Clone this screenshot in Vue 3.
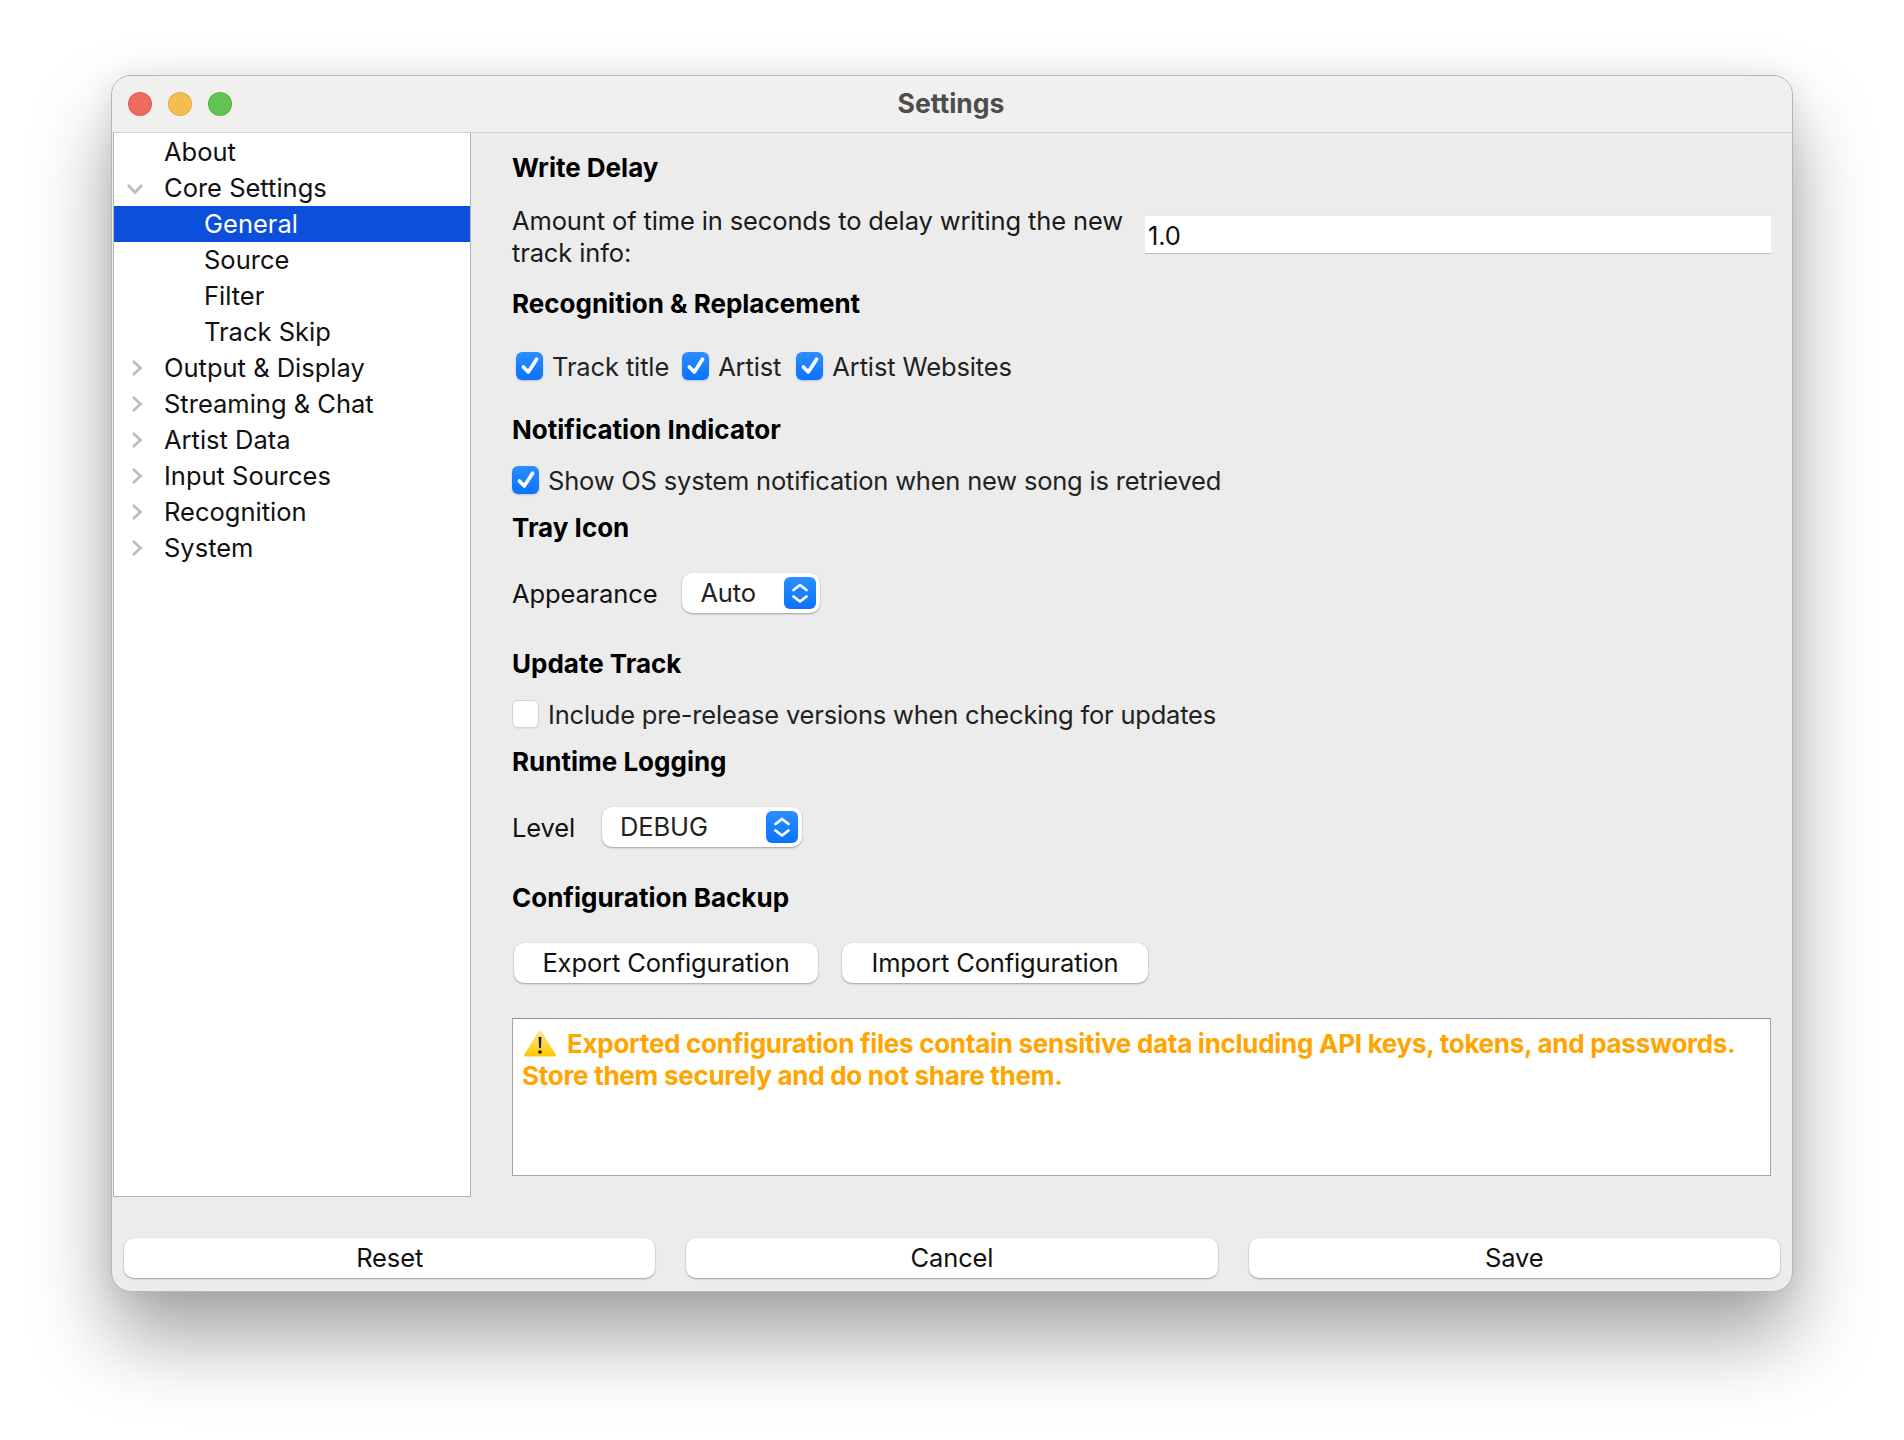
<script setup>
const tree = [
  { label: 'About', level: 1 },
  { label: 'Core Settings', level: 1, arrow: 'down' },
  { label: 'General', level: 2, selected: true },
  { label: 'Source', level: 2 },
  { label: 'Filter', level: 2 },
  { label: 'Track Skip', level: 2 },
  { label: 'Output & Display', level: 1, arrow: 'right' },
  { label: 'Streaming & Chat', level: 1, arrow: 'right' },
  { label: 'Artist Data', level: 1, arrow: 'right' },
  { label: 'Input Sources', level: 1, arrow: 'right' },
  { label: 'Recognition', level: 1, arrow: 'right' },
  { label: 'System', level: 1, arrow: 'right' },
]
const recog = [
  { label: 'Track title', cls: 'c1' },
  { label: 'Artist', cls: 'c2' },
  { label: 'Artist Websites', cls: 'c3' },
]
</script>

<template>
  <div class="page">
    <div class="window">
      <header class="titlebar">
        <div class="lights">
          <span class="light red"></span>
          <span class="light yellow"></span>
          <span class="light green"></span>
        </div>
        <div class="title">Settings</div>
      </header>

      <div class="body">
        <nav class="sidebar">
          <div
            v-for="item in tree"
            :key="item.label"
            class="row"
            :class="['lvl' + item.level, { selected: item.selected }]"
          >
            <svg v-if="item.arrow === 'down'" class="arrow down" viewBox="0 0 18 12" width="18" height="12">
              <path d="M2 2 L9 9.5 L16 2" fill="none" stroke="#bcbcbc" stroke-width="2.6" />
            </svg>
            <svg v-if="item.arrow === 'right'" class="arrow right" viewBox="0 0 12 18" width="12" height="18">
              <path d="M2 2 L9.5 9 L2 16" fill="none" stroke="#bcbcbc" stroke-width="2.6" />
            </svg>
            <span>{{ item.label }}</span>
          </div>
        </nav>

        <main class="panel">
          <h3 class="heading first">Write Delay</h3>
          <div class="delay">
            <label class="delay-label">Amount of time in seconds to delay writing the new track info:</label>
            <input class="delay-input" value="1.0" />
          </div>

          <h3 class="heading sm">Recognition &amp; Replacement</h3>
          <div class="checks">
            <div v-for="c in recog" :key="c.label" class="check" :class="c.cls">
              <span class="box on">
                <svg viewBox="0 0 28 28" width="28" height="28"><path d="M7.4 15 L12.3 20 L20.6 7.2" fill="none" stroke="#fff" stroke-width="3.6" stroke-linecap="round" stroke-linejoin="round" /></svg>
              </span>
              <span class="check-text">{{ c.label }}</span>
            </div>
          </div>

          <h3 class="heading lg">Notification Indicator</h3>
          <div class="check solo">
            <span class="box on">
              <svg viewBox="0 0 28 28" width="28" height="28"><path d="M7.4 15 L12.3 20 L20.6 7.2" fill="none" stroke="#fff" stroke-width="3.6" stroke-linecap="round" stroke-linejoin="round" /></svg>
            </span>
            <span class="check-text">Show OS system notification when new song is retrieved</span>
          </div>

          <h3 class="heading sm">Tray Icon</h3>
          <div class="field">
            <span class="field-label">Appearance</span>
            <div class="combo auto">
              <span class="combo-text">Auto</span>
              <span class="stepper">
                <svg viewBox="0 0 32 32" width="32" height="32"><path d="M9.5 13 L16 8 L22.5 13 M9.5 19.5 L16 24.5 L22.5 19.5" fill="none" stroke="#fff" stroke-width="2.8" stroke-linecap="round" stroke-linejoin="round" /></svg>
              </span>
            </div>
          </div>

          <h3 class="heading lgx">Update Track</h3>
          <div class="check solo">
            <span class="box"></span>
            <span class="check-text">Include pre-release versions when checking for updates</span>
          </div>

          <h3 class="heading sm">Runtime Logging</h3>
          <div class="field">
            <span class="field-label">Level</span>
            <div class="combo debug">
              <span class="combo-text">DEBUG</span>
              <span class="stepper">
                <svg viewBox="0 0 32 32" width="32" height="32"><path d="M9.5 13 L16 8 L22.5 13 M9.5 19.5 L16 24.5 L22.5 19.5" fill="none" stroke="#fff" stroke-width="2.8" stroke-linecap="round" stroke-linejoin="round" /></svg>
              </span>
            </div>
          </div>

          <h3 class="heading lgx">Configuration Backup</h3>
          <div class="backup">
            <button class="btn export">Export Configuration</button>
            <button class="btn import">Import Configuration</button>
          </div>

          <div class="warning">
            <svg class="warn-icon" viewBox="0 0 34 28" width="34" height="28">
              <defs>
                <linearGradient id="wg" x1="0" y1="0" x2="0" y2="1">
                  <stop offset="0" stop-color="#ffe58a" />
                  <stop offset="1" stop-color="#ffc800" />
                </linearGradient>
              </defs>
              <path d="M17 1.5 Q18 1.5 18.8 3 L32.6 25 Q33.6 27.5 31 27.5 L3 27.5 Q0.4 27.5 1.4 25 L15.2 3 Q16 1.5 17 1.5 Z" fill="url(#wg)" />
              <path d="M15.6 8 L18.4 8 L17.9 19 L16.1 19 Z" fill="#1a1a1a" />
              <circle cx="17" cy="23" r="1.8" fill="#1a1a1a" />
            </svg>
            <span>Exported configuration files contain sensitive data including API keys, tokens, and passwords.</span>
            <br />
            <span>Store them securely and do not share them.</span>
          </div>
        </main>
      </div>

      <footer class="footer">
        <button class="btn">Reset</button>
        <button class="btn">Cancel</button>
        <button class="btn">Save</button>
      </footer>
    </div>
  </div>
</template>

<style>
html, body { margin: 0; background: #fff; }
</style>

<style scoped>
.page {
  width: 1904px;
  height: 1440px;
  box-sizing: border-box;
  padding: 75px 0 0 111px;
  overflow: hidden;
  background: #fff;
  font-family: Inter, "Liberation Sans", sans-serif;
  font-size: 25.5px;
  letter-spacing: -0.13px;
  color: #1a1a1a;
}
.window {
  width: 1682px;
  height: 1217px;
  box-sizing: border-box;
  border: 1px solid #b5b5b5;
  border-radius: 20px;
  background: #ececec;
  box-shadow: 0 46px 80px rgba(0, 0, 0, 0.36), 0 0 30px rgba(0, 0, 0, 0.08);
  overflow: hidden;
}
.titlebar {
  height: 56px;
  display: flex;
  align-items: center;
  position: relative;
  background: #f1f0ef;
  border-bottom: 1px solid #d2d2d2;
}
.lights { display: flex; gap: 16px; margin-left: 16px; }
.light {
  width: 24px;
  height: 24px;
  box-sizing: border-box;
  border-radius: 50%;
  border: 1px solid rgba(0, 0, 0, 0.1);
}
.red { background: #ee6a5f; }
.yellow { background: #f5bd4f; }
.green { background: #61c454; }
.title {
  position: absolute;
  left: 0;
  right: 0;
  text-align: center;
  font-size: 26.5px;
  font-weight: 700;
  letter-spacing: 0;
  color: #4d4d4d;
  margin: -3px 0 0 -2px;
}
.body { display: flex; height: 1064px; }
.sidebar {
  width: 358px;
  height: 1065px;
  margin: -1px 0 0 1px;
  padding-top: 1px;
  flex: none;
  box-sizing: border-box;
  background: #fff;
  border: 1px solid #b3b3b3;
  border-top-color: #808080;
  letter-spacing: 0;
}
.row {
  height: 36px;
  line-height: 36px;
  position: relative;
  color: #111;
  white-space: nowrap;
}
.lvl1 { padding-left: 50px; }
.lvl2 { padding-left: 90px; }
.selected { background: #0b4fdb; color: #fff; }
.arrow { position: absolute; }
.arrow.down { left: 12px; top: 13px; }
.arrow.right { left: 17px; top: 9px; }

.panel {
  flex: 1;
  min-width: 0;
  padding: 0 21px 0 41px;
  display: flex;
  flex-direction: column;
}
.heading {
  margin: 0;
  height: 32px;
  line-height: 32px;
  font-size: 26px;
  font-weight: 700;
  letter-spacing: 0;
  color: #000;
}
.first { margin-top: 19px; }
.sm { margin-top: 18px; }
.lg { margin-top: 34px; }
.lgx { margin-top: 35px; }
.delay {
  margin-top: 22px;
  display: grid;
  grid-template-columns: 633px 1fr;
  height: 64px;
}
.delay-label { line-height: 31.5px; max-width: 625px; margin-top: -1px; }
.delay-input {
  margin-top: 9px;
  height: 39px;
  box-sizing: border-box;
  width: 100%;
  border: 0;
  border-bottom: 1px solid #bdbdbd;
  border-top: 1px solid #e8e8e8;
  border-radius: 0;
  background: #fff;
  outline: none;
  padding: 2px 3px 0;
  font: inherit;
  letter-spacing: inherit;
  color: #111;
}
.checks {
  margin-top: 32px;
  margin-left: 4px;
  display: flex;
}
.check { display: flex; align-items: center; height: 28px; }
.check.c1 { margin-right: 13px; }
.check.c2 { margin-right: 15px; }
.solo { margin-top: 20px; }
.box {
  width: 27px;
  height: 28px;
  flex: none;
  box-sizing: border-box;
  border-radius: 6px;
  background: #fff;
  border: 1px solid #d4d4d4;
  box-shadow: 0 1px 1px rgba(0, 0, 0, 0.06);
  display: block;
  position: relative;
}
.box.on {
  border: 0;
  background: linear-gradient(#2b8fff, #0a72ff);
  box-shadow: 0 1px 2px rgba(0, 0, 0, 0.2);
}
.box svg { display: block; }
.check-text { margin-left: 9px; color: #222; white-space: nowrap; }
.solo .check-text { letter-spacing: -0.2px; }
.field {
  margin-top: 29px;
  height: 40px;
  display: flex;
  align-items: center;
}
.field-label { color: #111; }
.combo {
  height: 40px;
  box-sizing: border-box;
  background: #fff;
  border-radius: 10px;
  box-shadow: 0 1px 2px rgba(0, 0, 0, 0.32), 0 0 1px rgba(0, 0, 0, 0.1);
  display: flex;
  align-items: center;
  justify-content: space-between;
  padding-right: 4px;
}
.combo.auto { width: 138px; margin-left: 25px; padding-left: 18px; }
.combo.debug { width: 200px; margin-left: 27px; padding-left: 18px; }
.combo-text { color: #222; margin-top: -1px; }
.stepper {
  width: 32px;
  height: 32px;
  border-radius: 6px;
  background: linear-gradient(#2b8fff, #0a72ff);
}
.stepper svg { display: block; }
.backup { margin-top: 29px; display: flex; margin-left: 2px; }
.btn {
  height: 40px;
  padding: 0 0 2px;
  border: 0;
  border-radius: 10px;
  background: #fff;
  box-shadow: 0 1px 2px rgba(0, 0, 0, 0.32), 0 0 1px rgba(0, 0, 0, 0.12);
  font: inherit;
  letter-spacing: inherit;
  color: #111;
}
.btn.export { width: 304px; }
.btn.import { width: 306px; margin-left: 24px; }
.warning {
  margin-top: 35px;
  height: 158px;
  box-sizing: border-box;
  background: #fff;
  border: 1px solid #a4a4a4;
  border-top-color: #8e8e8e;
  padding: 9px 9px;
  line-height: 32px;
  font-size: 26px;
  font-weight: 700;
  letter-spacing: -0.28px;
  color: #ffa500;
  white-space: nowrap;
}
.warn-icon {
  display: inline-block;
  vertical-align: -4px;
  margin-left: 1px;
  margin-right: 10px;
}
.footer {
  display: grid;
  grid-template-columns: repeat(3, 1fr);
  gap: 31px;
  padding: 41px 12px 0;
}
</style>
